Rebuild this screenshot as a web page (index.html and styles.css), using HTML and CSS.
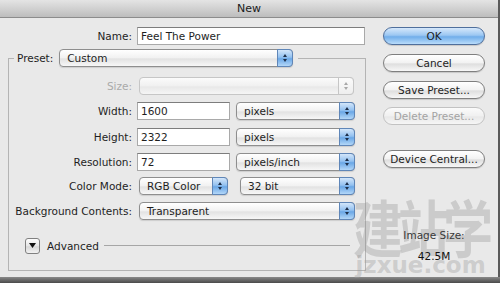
FILE: index.html
```html
<!DOCTYPE html>
<html lang="en">
<head>
    <meta charset="UTF-8">
    <title>New</title>
    <link rel="stylesheet" href="styles.css">
</head>
<body>
    <div class="window">
        <div class="titlebar">New</div>
        <div class="content">
            <div class="main">
                <div class="row">
                    <span class="lbl">Name:</span>
                    <div class="field name">Feel The Power</div>
                </div>
                <fieldset class="group">
                    <legend>
                        <span>Preset:</span>
                        <div class="popup preset">Custom<i class="stepper"></i></div>
                    </legend>
                    <div class="row first">
                        <span class="lbl off">Size:</span>
                        <div class="popup size off"><i class="stepper"></i></div>
                    </div>
                    <div class="row">
                        <span class="lbl">Width:</span>
                        <div class="field num">1600</div>
                        <div class="popup unit">pixels<i class="stepper"></i></div>
                    </div>
                    <div class="row gap8">
                        <span class="lbl">Height:</span>
                        <div class="field num">2322</div>
                        <div class="popup unit">pixels<i class="stepper"></i></div>
                    </div>
                    <div class="row">
                        <span class="lbl">Resolution:</span>
                        <div class="field num">72</div>
                        <div class="popup unit">pixels/inch<i class="stepper"></i></div>
                    </div>
                    <div class="row gap6">
                        <span class="lbl">Color Mode:</span>
                        <div class="popup mode">RGB Color<i class="stepper"></i></div>
                        <div class="popup depth">32 bit<i class="stepper"></i></div>
                    </div>
                    <div class="row">
                        <span class="lbl">Background Contents:</span>
                        <div class="popup bg">Transparent<i class="stepper"></i></div>
                    </div>
                    <div class="advanced">
                        <span class="disclosure">
                            <svg width="7" height="5" viewBox="0 0 7 5"><path d="M0 0H7L3.5 5Z" fill="#111"/></svg>
                        </span>
                        <span>Advanced</span>
                        <span class="rule"></span>
                    </div>
                </fieldset>
            </div>
            <div class="side">
                <div class="btn default">OK</div>
                <div class="btn">Cancel</div>
                <div class="btn">Save Preset...</div>
                <div class="btn off">Delete Preset...</div>
                <div class="btn central">Device Central...</div>
                <div class="info">Image Size:</div>
                <div class="info size-val">42.5M</div>
            </div>
        </div>
        <div class="watermark">
            <div class="wm-cn">建站学</div>
            <div class="wm-en">jzxue.com</div>
        </div>
    </div>
    <div class="shadow"></div>
</body>
</html>
```
FILE: styles.css
```css
*{
    margin: 0;
    padding: 0;
    box-sizing: border-box;
}
body{
    width: 500px;
    height: 283px;
    overflow: hidden;
    background: #e9e9e9;
    font-family: "DejaVu Sans", "Noto Sans CJK SC", sans-serif;
    font-size: 10.5px;
    color: #1e1e1e;
}
.window{
    height: 277px;
    position: relative;
    border-right: 2px solid #5a5a5a;
    background: #e9e9e9;
}
.titlebar{
    height: 18px;
    line-height: 17px;
    text-align: center;
    font-size: 11px;
    color: #1a1a1a;
    background: linear-gradient(#e4e4e4, #cdcdcd 60%, #bdbdbd);
    border-bottom: 1px solid #8c8c8c;
}
.content{
    display: flex;
}
.main{
    width: 366px;
    padding: 9px 0 0 8px;
}
.row{
    display: flex;
    align-items: center;
    height: 18px;
    margin-top: 7px;
}
.main>.row{
    margin-top: 0;
}
.row.first{
    margin-top: 10px;
}
.row.gap8{
    margin-top: 8px;
}
.row.gap6{
    margin-top: 6px;
}
.lbl{
    width: 125px;
    text-align: right;
    flex: none;
    padding-right: 1px;
}
.group .lbl{
    width: 124px;
}
.lbl.off{
    color: #a9a9a9;
}
.field{
    height: 18px;
    line-height: 17px;
    margin-left: 4px;
    padding-left: 3px;
    background: #fff;
    border: 1px solid #a9a9a9;
    border-top-color: #7d7d7d;
}
.field.name{
    width: 228px;
}
.field.num{
    width: 93px;
}
.group{
    margin-top: 4px;
    height: 222px;
    border: 1px solid #b4b4b4;
    padding: 0 10px 0 0;
}
.group legend{
    margin-left: 5px;
    padding: 0 5px 0 3px;
    display: flex;
    align-items: center;
    height: 18px;
}
.popup{
    position: relative;
    height: 18px;
    line-height: 16px;
    padding-left: 7px;
    margin-left: 6px;
    border: 1px solid #8e8e8e;
    border-radius: 4px;
    background: linear-gradient(#ffffff, #f1f1f1 50%, #e2e2e2 55%, #f7f7f7);
    box-shadow: 0 1px 1px rgba(0, 0, 0, 0.12);
}
.preset{
    width: 234px;
}
.size{
    width: 215px;
}
.unit{
    width: 119px;
}
.mode{
    width: 89px;
}
.depth{
    width: 115px;
    margin-left: 12px;
}
.bg{
    width: 216px;
}
.stepper{
    position: absolute;
    top: -1px;
    right: -1px;
    width: 16px;
    height: 18px;
    border: 1px solid #5f86b8;
    border-radius: 0 4px 4px 0;
    background: linear-gradient(#d3e6fa, #93c1f0 45%, #6aa7e6 55%, #b3d7f8);
}
.stepper::before,
.stepper::after{
    content: "";
    position: absolute;
    left: 5px;
    border-left: 2.5px solid transparent;
    border-right: 2.5px solid transparent;
}
.stepper::before{
    top: 4px;
    border-bottom: 3px solid #1d2f4a;
}
.stepper::after{
    top: 9px;
    border-top: 3px solid #1d2f4a;
}
.popup.off{
    border-color: #c6c6c6;
    background: linear-gradient(#fbfbfb, #f0f0f0 50%, #e8e8e8 55%, #f5f5f5);
    box-shadow: none;
}
.off .stepper{
    border-color: #c6c6c6;
    background: linear-gradient(#fbfbfb, #eeeeee);
}
.off .stepper::before{
    border-bottom-color: #a8a8a8;
}
.off .stepper::after{
    border-top-color: #a8a8a8;
}
.advanced{
    display: flex;
    align-items: center;
    height: 17px;
    margin-top: 17px;
    padding-left: 16px;
}
.disclosure{
    width: 15px;
    height: 16px;
    margin-right: 7px;
    display: flex;
    align-items: center;
    justify-content: center;
    border: 1px solid #808080;
    border-radius: 3px;
    background: linear-gradient(#fdfdfd, #e6e6e6 50%, #d8d8d8 55%, #f2f2f2);
}
.rule{
    flex: 1;
    height: 1px;
    margin: 0 5px 0 5px;
    background: #a6a6a6;
}
.side{
    width: 102px;
    margin-left: 17px;
    padding-top: 9px;
}
.btn{
    height: 18px;
    line-height: 16px;
    text-align: center;
    margin-bottom: 9px;
    border: 1px solid #7f7f7f;
    border-radius: 9px;
    background: linear-gradient(#ffffff, #f2f2f2 50%, #dedede 55%, #f7f7f7);
    box-shadow: 0 1px 1px rgba(0, 0, 0, 0.15);
}
.btn.default{
    border-color: #4f6f9c;
    background: linear-gradient(#d6e8fb, #9cc7f2 45%, #71aeea 55%, #b9dcfb);
}
.btn.off{
    color: #a3a3a3;
    border-color: #c2c2c2;
    box-shadow: none;
    margin-bottom: 25px;
    background: linear-gradient(#fbfbfb, #f0f0f0 50%, #e8e8e8 55%, #f6f6f6);
}
.btn:nth-child(3){
    margin-bottom: 8px;
}
.info{
    text-align: center;
    color: #3a3a3a;
    margin-top: 61px;
    line-height: 13px;
    position: relative;
    z-index: 1;
}
.info.size-val{
    margin-top: 8px;
    color: #111;
}
.watermark{
    position: absolute;
    left: 348px;
    top: 200px;
    width: 145px;
    color: rgba(140, 140, 140, 0.32);
    text-align: center;
    pointer-events: none;
}
.wm-cn{
    font-size: 50px;
    line-height: 64px;
    font-weight: bold;
    letter-spacing: -5px;
    transform: scaleY(1.25);
}
.wm-en{
    font-family: "DejaVu Sans", sans-serif;
    font-size: 23px;
    line-height: 22px;
    font-weight: bold;
    color: rgba(160, 160, 160, 0.4);
    margin-top: -10px;
}
.shadow{
    height: 6px;
    background: linear-gradient(#8a8a8a, #4a4a4a);
}
```
